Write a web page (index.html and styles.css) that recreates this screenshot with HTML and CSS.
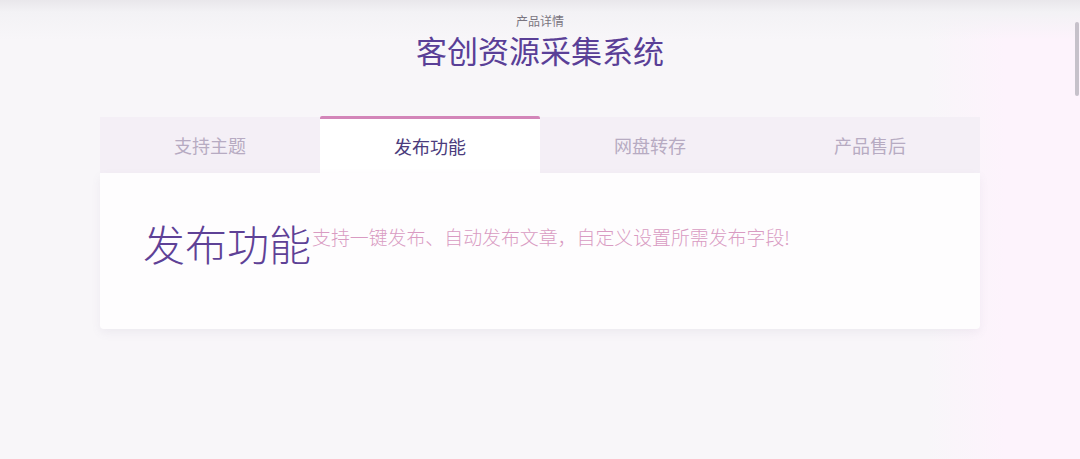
FILE: index.html
```html
<!DOCTYPE html>
<html lang="zh">
<head>
<meta charset="utf-8">
<link rel="stylesheet" href="styles.css">
</head>
<body>
<div class="page">
  <header class="head">
    <div class="eyebrow">产品详情</div>
    <h1 class="title">客创资源采集系统</h1>
  </header>
  <section class="tabs">
    <nav class="tab-bar">
      <div class="tab">支持主题</div>
      <div class="tab active">发布功能</div>
      <div class="tab">网盘转存</div>
      <div class="tab">产品售后</div>
    </nav>
    <div class="panel">
      <h2 class="panel-title">发布功能</h2>
      <p class="panel-desc">支持一键发布、自动发布文章，自定义设置所需发布字段!</p>
    </div>
  </section>
</div>
<div class="scroll-thumb"></div>
</body>
</html>
```
FILE: styles.css
```css
html, body {
  margin: 0;
  padding: 0;
  height: 100%;
  overflow: hidden;
}
body {
  font-family: "Noto Sans CJK SC", "Noto Sans", sans-serif;
  background:
    linear-gradient(to bottom, #e9e7eb 0px, #f3f2f5 12px, rgba(248,246,249,0) 40px),
    linear-gradient(to right, #f8f6f9 0%, #f8f6f9 86%, #fdf3fc 93%, #fdf3fc 100%);
}
.page {
  display: flex;
  flex-direction: column;
  align-items: center;
  padding-top: 12px;
}
.head {
  display: flex;
  flex-direction: column;
  align-items: center;
}
.eyebrow {
  font-size: 12px;
  line-height: 17px;
  color: #7a7580;
}
.title {
  margin: 0;
  font-size: 31px;
  font-weight: 400;
  line-height: 42px;
  color: #5a3f97;
}
.tabs {
  width: 880px;
  margin-top: 45px;
  display: flex;
  flex-direction: column;
}
.tab-bar {
  display: grid;
  grid-template-columns: repeat(4, 1fr);
  height: 57px;
}
.tab {
  display: flex;
  align-items: center;
  justify-content: center;
  background: #f4eff6;
  color: #b7abc2;
  font-size: 18px;
  margin-top: 1px;
}
.tab.active {
  background: #ffffff;
  color: #4b3b7c;
  margin-top: 0;
  border-top: 3px solid #d385b9;
  border-radius: 2px 2px 0 0;
}
.panel {
  background: #fefdfe;
  height: 156px;
  box-shadow: 0 4px 10px rgba(120, 100, 140, 0.08);
  border-radius: 0 0 4px 4px;
  display: flex;
  align-items: flex-start;
  padding: 40px 43px 0;
  box-sizing: border-box;
}
.panel-title {
  margin: 0;
  font-size: 42px;
  line-height: 60px;
  font-weight: 300;
  color: #5e4196;
  white-space: nowrap;
}
.panel-desc {
  margin: 9px 0 0 1px;
  font-size: 18.9px;
  line-height: 30px;
  font-weight: 300;
  color: #d99bc2;
  white-space: nowrap;
}
.scroll-thumb {
  position: fixed;
  right: 1px;
  top: 22px;
  width: 4px;
  height: 74px;
  border-radius: 2px;
  background: #c6c1ca;
}
```
